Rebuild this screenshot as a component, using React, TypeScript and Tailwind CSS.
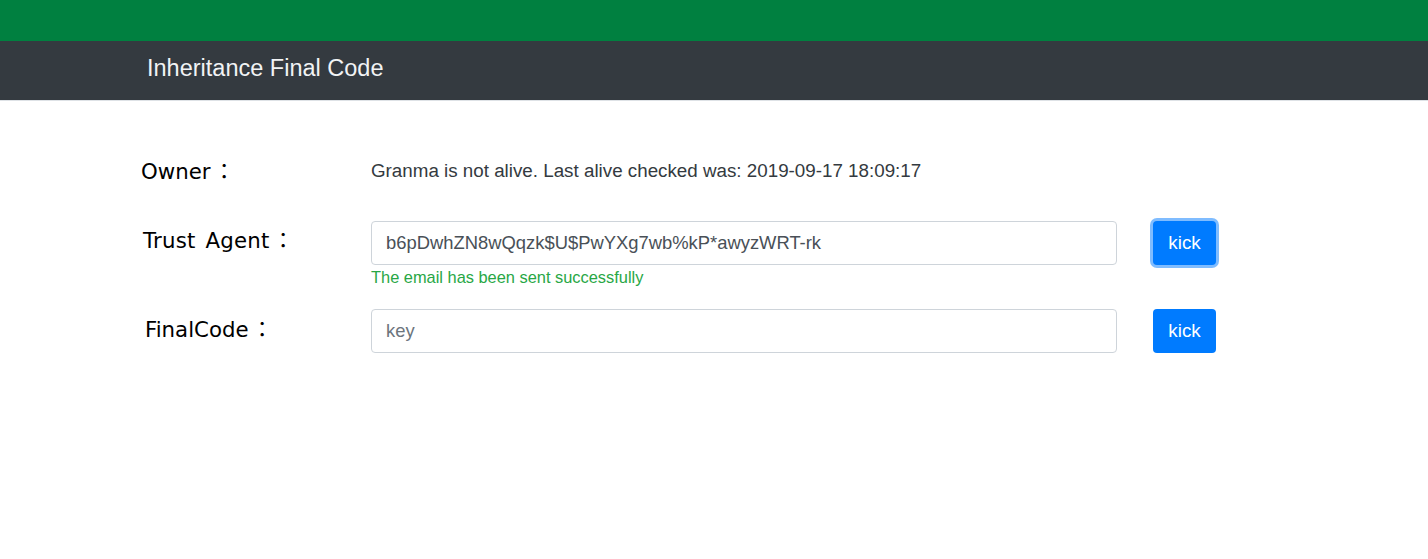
import React from "react";

export default function App() {
  const sans = { fontFamily: '"Liberation Sans", Arial, sans-serif' };
  const label = { fontFamily: '"DejaVu Sans", "Noto Sans CJK TC", sans-serif' };
  return (
    <div className="min-h-[559px] w-full bg-white" style={sans}>
      <div className="h-[41px] bg-[#008040]" />
      <div className="h-[60px] bg-[#343a40] border-b border-[#dee2e6]">
        <div className="pl-[147px] pt-[14px] text-[23.5px] leading-[26px] text-[#f1f3f5]">
          Inheritance Final Code
        </div>
      </div>

      <div className="pt-[56px] pl-[141px]">
        {/* Row 1 */}
        <div className="flex items-start">
          <div className="w-[230px] text-[21.3px] leading-[30px] text-black" style={label}>
            Owner<span className="pl-[3px]">：</span>
          </div>
          <div className="mt-[-1px] text-[18.8px] leading-[30px] text-[#343a40]">
            Granma is not alive. Last alive checked was: 2019-09-17 18:09:17
          </div>
        </div>

        {/* Row 2 */}
        <div className="mt-[34px] flex items-start">
          <div className="w-[230px] pl-[2px] pt-[5px] text-[21.3px] leading-[30px] text-black tracking-[0.2px] [word-spacing:3px]" style={label}>
            Trust Agent<span className="pl-[3px]">：</span>
          </div>
          <div className="flex flex-col">
            <input
              readOnly
              value="b6pDwhZN8wQqzk$U$PwYXg7wb%kP*awyzWRT-rk"
              className="h-[44px] w-[746px] rounded-[4px] border border-[#ced4da] bg-white px-[14px] text-[18.4px] text-[#495057] outline-none"
              style={sans}
            />
            <div className="mt-[2px] text-[16.4px] leading-[20px] text-[#28a745]">
              The email has been sent successfully
            </div>
          </div>
          <button className="ml-[36px] h-[44px] w-[63px] rounded-[4px] bg-[#007bff] text-[18.8px] text-white ring-[3px] ring-[#007bff]/50">
            kick
          </button>
        </div>

        {/* Row 3 */}
        <div className="mt-[22px] flex items-start">
          <div className="w-[230px] pl-[4px] pt-[6px] text-[21.3px] leading-[30px] text-black" style={label}>
            FinalCode<span className="pl-[3px]">：</span>
          </div>
          <input
            placeholder="key"
            className="h-[44px] w-[746px] rounded-[4px] border border-[#ced4da] bg-white px-[14px] text-[18.4px] text-[#495057] placeholder:text-[#6c757d] outline-none"
            style={sans}
          />
          <button className="ml-[36px] h-[44px] w-[63px] rounded-[4px] bg-[#007bff] text-[18.8px] text-white">
            kick
          </button>
        </div>
      </div>
    </div>
  );
}
